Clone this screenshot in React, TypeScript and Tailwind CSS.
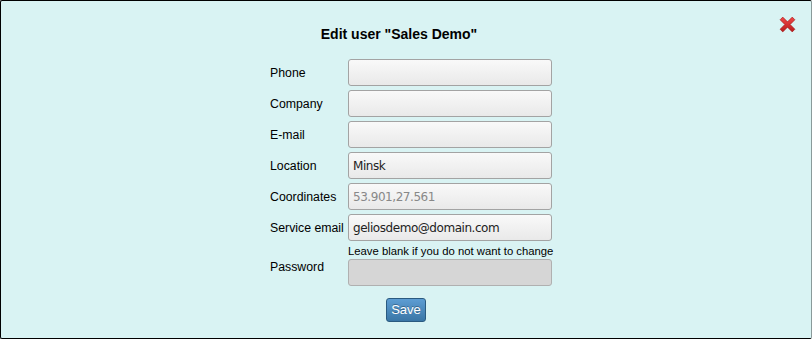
import React from "react";

const FIELDS = [
  { label: "Phone", value: "" },
  { label: "Company", value: "" },
  { label: "E-mail", value: "" },
  { label: "Location", value: "Minsk" },
  { label: "Coordinates", value: "53.901,27.561", muted: true },
  { label: "Service email", value: "geliosdemo@domain.com" },
];

function CloseIcon() {
  return (
    <svg width="19" height="19" viewBox="0 0 18 18">
      <defs>
        <linearGradient id="xg" x1="0" y1="0" x2="0" y2="1">
          <stop offset="0" stopColor="#f04848" />
          <stop offset="1" stopColor="#b81c1c" />
        </linearGradient>
      </defs>
      <path d="M2 4.5 L4.5 2 L9 6.5 L13.5 2 L16 4.5 L11.5 9 L16 13.5 L13.5 16 L9 11.5 L4.5 16 L2 13.5 L6.5 9 Z" fill="url(#xg)" stroke="#a31515" strokeWidth="0.6" strokeLinejoin="round" />
    </svg>
  );
}

export default function App() {
  return (
    <div className="w-[812px] h-[339px] bg-[#d9f3f3] border border-black border-r-[#8a9a9a] rounded-[2px] relative font-['Liberation_Sans',Arial,sans-serif] text-black">
      <button className="absolute right-[14px] top-[14px]">
        <CloseIcon />
      </button>

      <div className="flex flex-col items-center pt-[25px]">
        <h1 className="text-[14px] font-bold leading-[17px] mr-[14px]">Edit user "Sales Demo"</h1>

        <div className="ml-[10px] mt-[16px] w-[282px] flex flex-col">
          {FIELDS.map((f) => (
            <div key={f.label} className="flex items-center h-[27px] mb-[4px]">
              <span className="w-[78px] shrink-0 text-[12.3px] leading-[16px] mt-[1px]">{f.label}</span>
              <input
                readOnly
                value={f.value}
                className={`w-[204px] h-[27px] px-[4px] rounded-[3px] border border-[#a3a3a3] bg-gradient-to-b from-[#f9f9f9] to-[#e9e9e9] text-[12px] tracking-[-0.45px] font-['DejaVu_Sans',sans-serif] outline-none ${
                  f.muted ? "text-[#888]" : "text-[#222]"
                }`}
              />
            </div>
          ))}

          <div className="flex items-center">
            <span className="w-[78px] shrink-0 text-[12.3px] leading-[16px] mt-[2px]">Password</span>
            <div className="flex flex-col w-[204px]">
              <span className="text-[11.3px] leading-[13px] mb-[1px] whitespace-nowrap">Leave blank if you do not want to change</span>
              <input
                type="password"
                readOnly
                className="w-[204px] h-[27px] rounded-[3px] border border-[#b0b0b0] bg-[#d6d6d6] outline-none"
              />
            </div>
          </div>
        </div>

        <button className="mt-[12px] h-[24px] px-[4px] rounded-[3px] border border-[#2a5a80] bg-gradient-to-b from-[#5d9dd3] to-[#3a76a6] text-white text-[13px] [text-shadow:0_-1px_0_rgba(0,0,0,0.3)]">
          Save
        </button>
      </div>
    </div>
  );
}
